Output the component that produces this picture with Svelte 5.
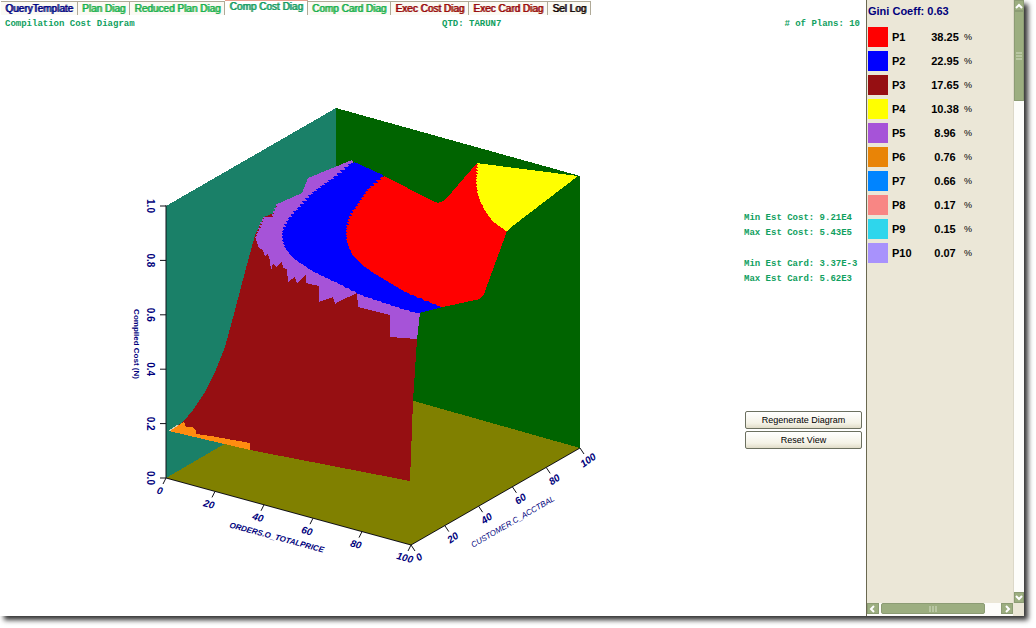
<script lang="ts">
    type Point = [number, number];

    const tabs = [
        { label: "QueryTemplate", tone: "navy" },
        { label: "Plan Diag", tone: "green" },
        { label: "Reduced Plan Diag", tone: "green" },
        { label: "Comp Cost Diag", tone: "teal" },
        { label: "Comp Card Diag", tone: "green" },
        { label: "Exec Cost Diag", tone: "red" },
        { label: "Exec Card Diag", tone: "red" },
        { label: "Sel Log", tone: "black" },
    ];

    const plans = [
        { name: "P1", share: "38.25", color: "#ff0000" },
        { name: "P2", share: "22.95", color: "#0000ff" },
        { name: "P3", share: "17.65", color: "#960f12" },
        { name: "P4", share: "10.38", color: "#ffff00" },
        { name: "P5", share: "8.96", color: "#a653d8" },
        { name: "P6", share: "0.76", color: "#e98406" },
        { name: "P7", share: "0.66", color: "#0084ff" },
        { name: "P8", share: "0.17", color: "#f88684" },
        { name: "P9", share: "0.15", color: "#2ed6ec" },
        { name: "P10", share: "0.07", color: "#a892fc" },
    ];

    let active = $state("Comp Cost Diag");

    const zTicks = ["0.0", "0.2", "0.4", "0.6", "0.8", "1.0"];
    const ticks = [0, 20, 40, 60, 80, 100];

    // left edges of the plan regions on the surface
    const blueEdge: Point[] = [[353, 161], [333, 177], [312, 192], [297, 208], [288, 218], [283, 228], [282, 237], [285, 247], [293, 257], [312, 270], [337, 282], [363, 295], [390, 304], [419, 313]];
    const redEdge: Point[] = [[383, 175], [367, 189], [355, 207], [349, 217], [346, 228], [347, 242], [353, 255], [362, 264], [373, 272], [403, 290], [443, 307]];
    const yellowEdge: Point[] = [[477, 163], [476, 180], [478, 195], [485, 210], [492, 220], [500, 226], [507, 231]];
    const purpleEdge: Point[] = [[276, 205], [272, 215], [263, 217], [255, 237], [258, 246], [263, 250]];

    function jag(points: Point[]): string {
        const out: string[] = [];
        points.slice(1).forEach(([x2, y2], i) => {
            const [x1, y1] = points[i];
            const steps = Math.max(1, Math.round(Math.abs(y2 - y1) / 3));
            for (let s = 0; s < steps; s++) {
                const x = x1 + ((x2 - x1) * s) / steps;
                const y = y1 + ((y2 - y1) * s) / steps;
                out.push(`${x - 1},${y}`, `${x + 1},${y + 2}`);
            }
        });
        out.push(points[points.length - 1].join(","));
        return out.join(" ");
    }
</script>

<div class="window">
    <main>
        <div class="tabs" role="tablist">
            {#each tabs as tab}
                <button
                    role="tab"
                    class="tab {tab.tone}"
                    class:active={tab.label === active}
                    aria-selected={tab.label === active}
                    onclick={() => (active = tab.label)}
                >{tab.label}</button>
            {/each}
        </div>

        <header class="mono">
            <span>Compilation Cost Diagram</span>
            <span>QTD: TARUN7</span>
            <span># of Plans: 10</span>
        </header>

        <div class="body">
            <svg class="plot" viewBox="0 33 744 582" preserveAspectRatio="xMinYMin meet">
                <g shape-rendering="crispEdges">
                    <polygon points="336,108 166,206 166,478 336,379" fill="#1a8068" />
                    <polygon points="336,108 580,176 580,448 336,379" fill="#006400" />
                    <polygon points="166,478 336,379 580,448 411,545" fill="#808000" />
                    <path
                        d="M169 431 L183 422 L193 410 L205 392 L215 372 L225 347 L235 310 L245 272 L255 235 L264 217 L274 213 L277 205 L302 193 L308 178 L352 160 L419 313 L417 339 L413 401 L410 481 L250 450 Z"
                        fill="#960f12"
                    />
                    <polygon points="169,431 184,422 186,427 192,427 196,430 196,434 211,436 250,443 250,450" fill="#ff8c10" />
                    <polyline points="169,431 178,425" stroke="#d8c8b0" fill="none" />
                    <polygon
                        points="352,160 308,178 302,193 {jag(purpleEdge)} 265,256 268,254 270,260 271,271 273,263 276,267 282,262 283,268 287,269 288,282 295,277 297,283 306,275 306,283 319,286 319,302 333,297 335,304 340,301 357,293 358,307 390,315 390,337 417,339 420,313"
                        fill="#a653d8"
                    />
                    <polygon points="{jag(blueEdge)} 443,307 400,240 383,175" fill="#0000ff" />
                    <polygon points="{jag(redEdge)} 480,299 484,294 507,231 477,163 452,192 443,201 438,203 433,201" fill="#ff0000" />
                    <polygon points="{jag(yellowEdge)} 514,225 578,176" fill="#ffff00" />
                </g>
                <g class="axis">
                    <path d="M166 205 V478 L411 545 L580 448" />
                    {#each ticks as t, i}
                        <path d="M160 {478 - i * 54.4} h6" />
                        <path d="M{166 + i * 49} {478 + i * 13.4} l-3 6" />
                        <path d="M{411 + i * 33.8} {545 - i * 19.4} l4 6" />
                    {/each}
                </g>
                <g class="labels">
                    {#each ticks as t, i}
                        <text transform="translate({147} {478 - i * 54.4}) rotate(90)">{zTicks[i]}</text>
                        <text class="slanted" transform="translate({159 + i * 49} {494 + i * 13.4}) rotate(15)">{t}</text>
                        <text class="slanted" transform="translate({421 + i * 33.8} {560 - i * 19.4}) rotate(-35)">{t}</text>
                    {/each}
                    <text class="name" transform="translate(134 344) rotate(90)">Compiled Cost (N)</text>
                    <text class="slanted name" transform="translate(276 540) rotate(15)">ORDERS.O_TOTALPRICE</text>
                    <text class="slanted name light" transform="translate(514 524) rotate(-30)">CUSTOMER.C_ACCTBAL</text>
                </g>
            </svg>

            <aside class="mono">
                <p>Min Est Cost: 9.21E4</p>
                <p>Max Est Cost: 5.43E5</p>
                <p class="gap">Min Est Card: 3.37E-3</p>
                <p>Max Est Card: 5.62E3</p>
                <div class="actions">
                    <button>Regenerate Diagram</button>
                    <button>Reset View</button>
                </div>
            </aside>
        </div>
    </main>

    <section class="legend">
        <div class="content">
            <h2>Gini Coeff: 0.63</h2>
            <table>
                <tbody>
                    {#each plans as plan}
                        <tr>
                            <td class="swatch"><i style="background: {plan.color}"></i></td>
                            <th scope="row">{plan.name}</th>
                            <td class="share">{plan.share}</td>
                            <td class="unit">%</td>
                        </tr>
                    {/each}
                </tbody>
            </table>
        </div>
        <div class="scroll vertical">
            <button aria-label="Scroll up"><svg viewBox="0 0 10 10"><path d="M2 7l3-3 3 3" /></svg></button>
            <div class="thumb"><svg viewBox="0 0 10 10"><path class="grip" d="M2 2h6M2 5h6M2 8h6" /></svg></div>
            <div class="track"></div>
            <button aria-label="Scroll down"><svg viewBox="0 0 10 10"><path d="M2 3l3 3 3-3" /></svg></button>
        </div>
        <div class="scroll horizontal">
            <button aria-label="Scroll left"><svg viewBox="0 0 10 10"><path d="M6 2l-3 3 3 3" /></svg></button>
            <div class="thumb"><svg viewBox="0 0 10 10"><path class="grip" d="M2 2v6M5 2v6M8 2v6" /></svg></div>
            <div class="track"></div>
            <button aria-label="Scroll right"><svg viewBox="0 0 10 10"><path d="M4 2l3 3-3 3" /></svg></button>
        </div>
    </section>
</div>

<style>
    :global(body) {
        background: #fff;
        padding: 0 12px 12px 0;
        font-family: "Liberation Sans", Arial, sans-serif;
    }

    button {
        font-family: inherit;
        padding: 0;
        cursor: pointer;
    }

    .window {
        display: grid;
        grid-template-columns: 1fr 158px;
        min-height: calc(100vh - 12px);
        background: #fff;
        box-shadow: 4px 4px 5px rgba(0, 0, 0, 0.8);
    }

    main {
        display: flex;
        flex-direction: column;
        min-width: 0;
    }

    .tabs {
        display: flex;
        align-items: flex-end;
        height: 15px;
        padding-left: 1px;
    }

    .tab {
        height: 14px;
        padding: 0 4px;
        border: 1px solid #b0aa98;
        border-width: 1px 1px 0 0;
        background: #fbfaf4;
        font-size: 10px;
        line-height: 13px;
        white-space: nowrap;
        text-shadow: 1px 0 currentColor;
    }

    .tab.active {
        height: 15px;
        padding-bottom: 3px;
        border-top-color: #e8a090;
        background: #fff;
        line-height: 11px;
    }

    .navy { color: #000080; }
    .green { color: #18b04c; }
    .teal { color: #109c60; }
    .red { color: #980808; }
    .black { color: #100404; }

    .mono {
        color: #10a060;
        font-family: "Liberation Mono", "Courier New", monospace;
        font-size: 9px;
        font-weight: bold;
    }

    header {
        display: grid;
        grid-template-columns: 437px 1fr auto;
        padding: 0 6px 0 5px;
        line-height: 18px;
    }

    .body {
        flex: 1;
        display: grid;
        grid-template-columns: 1fr 118px;
        padding-right: 4px;
    }

    .plot {
        display: block;
        width: 100%;
    }

    .axis path {
        stroke: #101018;
        stroke-width: 1;
        fill: none;
    }

    .labels {
        fill: #00007c;
        font-size: 10px;
        font-weight: bold;
        text-anchor: middle;
    }

    .slanted {
        font-style: italic;
    }

    .name {
        font-size: 8px;
    }

    .light {
        font-weight: normal;
    }

    aside {
        padding-top: 178px;
    }

    p {
        margin: 0;
        line-height: 15px;
        white-space: nowrap;
    }

    p.gap {
        margin-top: 16px;
    }

    .actions {
        display: grid;
        gap: 2px;
        margin: 124px 0 0 1px;
    }

    .actions button {
        height: 18px;
        border: 1px solid #6c7060;
        border-radius: 2px;
        background: linear-gradient(#fff, #f4f2e6 70%, #e0dcc8);
        color: #000;
        font-family: "Liberation Sans", Arial, sans-serif;
        font-size: 9px;
    }

    .legend {
        display: grid;
        grid-template-columns: 1fr 11px;
        grid-template-rows: 1fr 13px;
        box-sizing: border-box;
        border-left: 1px solid #6a6850;
        background: #ebe7d7;
    }

    .content {
        padding: 2px 1px;
    }

    h2 {
        margin: 0;
        color: #00007c;
        font-size: 11px;
        line-height: 18px;
    }

    table {
        border-collapse: collapse;
        margin-top: 5px;
        color: #000;
        font-size: 11px;
    }

    tr {
        height: 24px;
    }

    td,
    th {
        padding: 0;
        text-align: left;
    }

    .swatch {
        width: 24px;
    }

    .swatch i {
        display: block;
        width: 20px;
        height: 20px;
    }

    th {
        width: 38px;
    }

    .share {
        width: 30px;
        font-weight: bold;
        text-align: center;
    }

    .unit {
        padding-left: 4px;
        font-size: 9px;
    }

    .scroll {
        display: flex;
        background: #fdfdfa;
    }

    .vertical {
        flex-direction: column;
        border-left: 1px solid #dcd8c8;
    }

    .scroll button,
    .thumb {
        display: flex;
        align-items: center;
        justify-content: center;
        border: 1px solid #8c9c74;
        background: #9cae80;
    }

    .scroll button {
        height: 11px;
    }

    .scroll svg {
        width: 10px;
        height: 10px;
        flex: none;
    }

    .scroll path {
        fill: none;
        stroke: #fff;
        stroke-width: 2;
    }

    .scroll .grip {
        stroke: #d4dec4;
        stroke-width: 1;
    }

    .vertical .thumb {
        flex: 0 0 88px;
    }

    .track {
        flex: 1;
    }

    .horizontal {
        padding-bottom: 2px;
    }

    .horizontal button {
        width: 12px;
    }

    .horizontal .thumb {
        flex: 0 0 104px;
        box-sizing: border-box;
        margin-left: 2px;
        border-radius: 2px;
    }
</style>
